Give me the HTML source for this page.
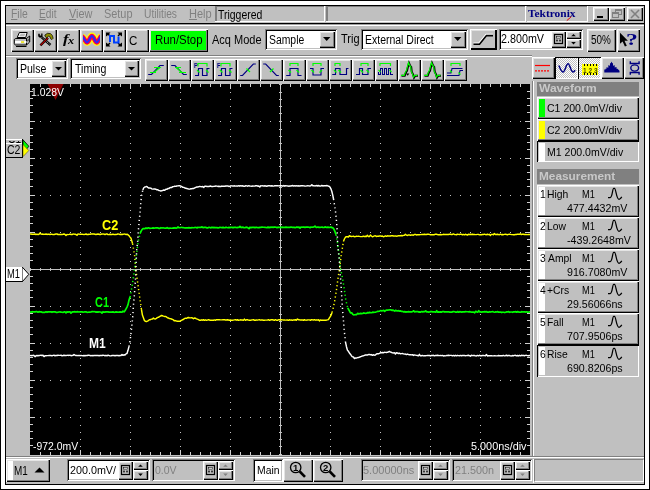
<!DOCTYPE html>
<html><head><meta charset="utf-8"><title>Tektronix</title>
<style>
html,body{margin:0;padding:0}
body{width:650px;height:490px;position:relative;overflow:hidden;background:#fff;font-family:"Liberation Sans",sans-serif;font-size:11px;color:#000}
#a{position:absolute;left:0;top:0;width:650px;height:490px;overflow:hidden;will-change:transform}
#a div,#a span,#a svg{position:absolute;box-sizing:border-box}
.t{white-space:nowrap;line-height:1;transform-origin:0 0;display:block}
.r{background:#c0c0c0;box-shadow:inset 1px 1px 0 #fff,inset -1px -1px 0 #000,inset -2px -2px 0 #808080,inset 2px 2px 0 #e4e4e4}
.r2{background:#c0c0c0;box-shadow:inset 1px 1px 0 #fff,inset -2px -2px 0 #000,inset 2px 2px 0 #dfdfdf}
.s{box-shadow:inset 1px 1px 0 #808080,inset -1px -1px 0 #fff,inset 2px 2px 0 #000,inset -2px -2px 0 #c0c0c0}
.p{background-color:#c0c0c0;box-shadow:inset 1px 1px 0 #000,inset -1px -1px 0 #fff}
.s1{box-shadow:inset -1px -1px 0 #fff,inset 1px 1px 0 #808080,inset 2px 0 0 #808080}
.ck{background-image:conic-gradient(#fff 25%,#c0c0c0 0 50%,#fff 0 75%,#c0c0c0 0);background-size:2px 2px}
</style></head>
<body><div id="a">
<div style="left:0px;top:0px;width:650px;height:490px;border:1px solid #000;background:#fff"></div>
<div style="left:5px;top:5px;width:640px;height:480px;border:1px solid #000;background:#c0c0c0"></div>
<span class="t" style="left:10.75px;top:8.00px;font-size:12px;color:#808080;transform:scaleX(0.866);"><u>F</u>ile</span>
<span class="t" style="left:39.17px;top:8.00px;font-size:12px;color:#808080;transform:scaleX(0.845);"><u>E</u>dit</span>
<span class="t" style="left:68.67px;top:8.00px;font-size:12px;color:#808080;transform:scaleX(0.910);"><u>V</u>iew</span>
<span class="t" style="left:103.92px;top:8.00px;font-size:12px;color:#808080;transform:scaleX(0.909);">Setup</span>
<span class="t" style="left:144.26px;top:8.00px;font-size:12px;color:#808080;transform:scaleX(0.853);">Utilities</span>
<span class="t" style="left:188.81px;top:8.00px;font-size:12px;color:#808080;transform:scaleX(0.919);"><u>H</u>elp</span>
<div class="s1" style="left:215px;top:6px;width:110px;height:16px;"></div>
<div class="s1" style="left:326px;top:6px;width:200px;height:16px;"></div>
<div style="left:527px;top:6px;width:61px;height:16px;box-shadow:inset -1px -1px 0 #fff,inset 0 1px 0 #808080"></div>
<span class="t" style="left:218.28px;top:9.00px;font-size:12px;color:#000;transform:scaleX(0.870);">Triggered</span>
<span class="t" style="left:528.40px;top:8.00px;font-size:11px;color:#000080;font-weight:bold;font-family:&quot;Liberation Serif&quot;,serif;transform:scaleX(1.036);">Tektronix</span>
<div class="r" style="left:593px;top:7px;width:16px;height:14px;"></div>
<div class="r" style="left:609px;top:7px;width:16px;height:14px;"></div>
<div class="r" style="left:627px;top:7px;width:16px;height:14px;"></div>
<div style="left:6px;top:23px;width:638px;height:1px;background:#000"></div>
<div style="left:6px;top:24px;width:638px;height:1px;background:#a0a0a0"></div>
<div style="left:6px;top:25px;width:638px;height:1px;background:#fff"></div>
<div class="r" style="left:11px;top:29px;width:23px;height:23px;"></div>
<div class="r" style="left:34px;top:29px;width:23px;height:23px;"></div>
<div class="r" style="left:57px;top:29px;width:23px;height:23px;"></div>
<div class="r" style="left:80px;top:29px;width:23px;height:23px;"></div>
<div class="r" style="left:103px;top:29px;width:23px;height:23px;"></div>
<div class="r" style="left:126px;top:29px;width:23px;height:23px;"></div>
<div class="r" style="left:149px;top:29px;width:59px;height:23px;"></div>
<div style="left:151px;top:31px;width:55px;height:19px;background:#00ff00"></div>
<span class="t" style="left:154.99px;top:34.00px;font-size:12px;color:#000;transform:scaleX(0.950);">Run/Stop</span>
<span class="t" style="left:212.00px;top:34.00px;font-size:12px;color:#000;transform:scaleX(0.916);">Acq Mode</span>
<div class="s" style="left:265px;top:29px;width:72px;height:21px;background:#fff"></div>
<div class="r" style="left:319px;top:31px;width:16px;height:17px;"></div>
<span class="t" style="left:269.15px;top:34.00px;font-size:12px;color:#000;transform:scaleX(0.866);">Sample</span>
<span class="t" style="left:341.47px;top:33.00px;font-size:12px;color:#000;transform:scaleX(0.914);">Trig</span>
<div class="s" style="left:361px;top:29px;width:107px;height:21px;background:#fff"></div>
<div class="r" style="left:450px;top:31px;width:16px;height:17px;"></div>
<span class="t" style="left:365.05px;top:34.00px;font-size:12px;color:#000;transform:scaleX(0.873);">External Direct</span>
<div class="r2" style="left:470px;top:29px;width:27px;height:21px;"></div>
<div class="s" style="left:499px;top:29px;width:84px;height:21px;background:#fff"></div>
<span class="t" style="left:501.25px;top:33.00px;font-size:12px;color:#000;transform:scaleX(0.895);">2.800mV</span>
<div class="r" style="left:551px;top:31px;width:15px;height:17px;"></div>
<div class="r" style="left:566px;top:31px;width:15px;height:8px;"></div>
<div class="r" style="left:566px;top:39px;width:15px;height:9px;"></div>
<div class="r" style="left:587px;top:29px;width:29px;height:23px;"></div>
<span class="t" style="left:591.19px;top:34.00px;font-size:12px;color:#000;transform:scaleX(0.826);">50%</span>
<div class="r" style="left:617px;top:29px;width:23px;height:23px;"></div>
<span class="t" style="left:625.62px;top:31.00px;font-size:17px;color:#000080;font-weight:bold;font-family:&quot;Liberation Serif&quot;,serif;transform:scaleX(1.385);">?</span>
<div style="left:6px;top:55px;width:526px;height:1px;background:#808080"></div>
<div style="left:6px;top:56px;width:526px;height:1px;background:#fff"></div>
<div class="s" style="left:16px;top:58px;width:52px;height:21px;background:#fff"></div>
<div class="r" style="left:51px;top:60px;width:15px;height:17px;"></div>
<span class="t" style="left:20.14px;top:63.00px;font-size:12px;color:#000;transform:scaleX(0.877);">Pulse</span>
<div class="s" style="left:70px;top:58px;width:71px;height:21px;background:#fff"></div>
<div class="r" style="left:124px;top:60px;width:15px;height:17px;"></div>
<span class="t" style="left:74.78px;top:63.00px;font-size:12px;color:#000;transform:scaleX(0.881);">Timing</span>
<div class="r" style="left:145px;top:59px;width:23px;height:22px;"></div>
<div class="r" style="left:168px;top:59px;width:23px;height:22px;"></div>
<div class="r" style="left:191px;top:59px;width:23px;height:22px;"></div>
<div class="r" style="left:214px;top:59px;width:23px;height:22px;"></div>
<div class="r" style="left:237px;top:59px;width:23px;height:22px;"></div>
<div class="r" style="left:260px;top:59px;width:23px;height:22px;"></div>
<div class="r" style="left:283px;top:59px;width:23px;height:22px;"></div>
<div class="r" style="left:306px;top:59px;width:23px;height:22px;"></div>
<div class="r" style="left:329px;top:59px;width:23px;height:22px;"></div>
<div class="r" style="left:352px;top:59px;width:23px;height:22px;"></div>
<div class="r" style="left:375px;top:59px;width:23px;height:22px;"></div>
<div class="r" style="left:398px;top:59px;width:23px;height:22px;"></div>
<div class="r" style="left:421px;top:59px;width:23px;height:22px;"></div>
<div class="r" style="left:444px;top:59px;width:23px;height:22px;"></div>
<div class="r" style="left:532px;top:57px;width:23px;height:22px;"></div>
<div class="p ck" style="left:555px;top:57px;width:23px;height:22px;"></div>
<div class="p ck" style="left:578px;top:57px;width:23px;height:22px;"></div>
<div class="r" style="left:601px;top:57px;width:23px;height:22px;"></div>
<div class="r" style="left:624px;top:57px;width:20px;height:22px;"></div>
<div style="left:30px;top:84px;width:500px;height:371px;background:#000"></div>
<div style="left:532px;top:81px;width:1px;height:375px;background:#808080"></div>
<div style="left:533px;top:81px;width:1px;height:375px;background:#fff"></div>
<div style="left:6px;top:456px;width:638px;height:1px;background:#808080"></div>
<div style="left:6px;top:457px;width:638px;height:1px;background:#fff"></div>
<svg style="left:0;top:0" width="650" height="490" viewBox="0 0 650 490"><clipPath id="cp"><rect x="30" y="84" width="500" height="371"/></clipPath><path d="M30 121h1M30 158h1M30 195h1M30 232h1M30 306h1M30 343h1M30 380h1M30 417h1M40 121h1M40 158h1M40 195h1M40 232h1M40 306h1M40 343h1M40 380h1M40 417h1M50 121h1M50 158h1M50 195h1M50 232h1M50 306h1M50 343h1M50 380h1M50 417h1M60 121h1M60 158h1M60 195h1M60 232h1M60 306h1M60 343h1M60 380h1M60 417h1M70 121h1M70 158h1M70 195h1M70 232h1M70 306h1M70 343h1M70 380h1M70 417h1M80 84h1M80 92h1M80 99h1M80 106h1M80 113h1M80 121h1M80 129h1M80 136h1M80 143h1M80 150h1M80 158h1M80 166h1M80 173h1M80 180h1M80 187h1M80 195h1M80 203h1M80 210h1M80 217h1M80 224h1M80 232h1M80 240h1M80 247h1M80 254h1M80 261h1M80 269h1M80 277h1M80 284h1M80 291h1M80 298h1M80 306h1M80 314h1M80 321h1M80 328h1M80 335h1M80 343h1M80 351h1M80 358h1M80 365h1M80 372h1M80 380h1M80 388h1M80 395h1M80 402h1M80 409h1M80 417h1M80 425h1M80 432h1M80 439h1M80 446h1M80 454h1M90 121h1M90 158h1M90 195h1M90 232h1M90 306h1M90 343h1M90 380h1M90 417h1M100 121h1M100 158h1M100 195h1M100 232h1M100 306h1M100 343h1M100 380h1M100 417h1M110 121h1M110 158h1M110 195h1M110 232h1M110 306h1M110 343h1M110 380h1M110 417h1M120 121h1M120 158h1M120 195h1M120 232h1M120 306h1M120 343h1M120 380h1M120 417h1M130 84h1M130 92h1M130 99h1M130 106h1M130 113h1M130 121h1M130 129h1M130 136h1M130 143h1M130 150h1M130 158h1M130 166h1M130 173h1M130 180h1M130 187h1M130 195h1M130 203h1M130 210h1M130 217h1M130 224h1M130 232h1M130 240h1M130 247h1M130 254h1M130 261h1M130 269h1M130 277h1M130 284h1M130 291h1M130 298h1M130 306h1M130 314h1M130 321h1M130 328h1M130 335h1M130 343h1M130 351h1M130 358h1M130 365h1M130 372h1M130 380h1M130 388h1M130 395h1M130 402h1M130 409h1M130 417h1M130 425h1M130 432h1M130 439h1M130 446h1M130 454h1M140 121h1M140 158h1M140 195h1M140 232h1M140 306h1M140 343h1M140 380h1M140 417h1M150 121h1M150 158h1M150 195h1M150 232h1M150 306h1M150 343h1M150 380h1M150 417h1M160 121h1M160 158h1M160 195h1M160 232h1M160 306h1M160 343h1M160 380h1M160 417h1M170 121h1M170 158h1M170 195h1M170 232h1M170 306h1M170 343h1M170 380h1M170 417h1M180 84h1M180 92h1M180 99h1M180 106h1M180 113h1M180 121h1M180 129h1M180 136h1M180 143h1M180 150h1M180 158h1M180 166h1M180 173h1M180 180h1M180 187h1M180 195h1M180 203h1M180 210h1M180 217h1M180 224h1M180 232h1M180 240h1M180 247h1M180 254h1M180 261h1M180 269h1M180 277h1M180 284h1M180 291h1M180 298h1M180 306h1M180 314h1M180 321h1M180 328h1M180 335h1M180 343h1M180 351h1M180 358h1M180 365h1M180 372h1M180 380h1M180 388h1M180 395h1M180 402h1M180 409h1M180 417h1M180 425h1M180 432h1M180 439h1M180 446h1M180 454h1M190 121h1M190 158h1M190 195h1M190 232h1M190 306h1M190 343h1M190 380h1M190 417h1M200 121h1M200 158h1M200 195h1M200 232h1M200 306h1M200 343h1M200 380h1M200 417h1M210 121h1M210 158h1M210 195h1M210 232h1M210 306h1M210 343h1M210 380h1M210 417h1M220 121h1M220 158h1M220 195h1M220 232h1M220 306h1M220 343h1M220 380h1M220 417h1M230 84h1M230 92h1M230 99h1M230 106h1M230 113h1M230 121h1M230 129h1M230 136h1M230 143h1M230 150h1M230 158h1M230 166h1M230 173h1M230 180h1M230 187h1M230 195h1M230 203h1M230 210h1M230 217h1M230 224h1M230 232h1M230 240h1M230 247h1M230 254h1M230 261h1M230 269h1M230 277h1M230 284h1M230 291h1M230 298h1M230 306h1M230 314h1M230 321h1M230 328h1M230 335h1M230 343h1M230 351h1M230 358h1M230 365h1M230 372h1M230 380h1M230 388h1M230 395h1M230 402h1M230 409h1M230 417h1M230 425h1M230 432h1M230 439h1M230 446h1M230 454h1M240 121h1M240 158h1M240 195h1M240 232h1M240 306h1M240 343h1M240 380h1M240 417h1M250 121h1M250 158h1M250 195h1M250 232h1M250 306h1M250 343h1M250 380h1M250 417h1M260 121h1M260 158h1M260 195h1M260 232h1M260 306h1M260 343h1M260 380h1M260 417h1M270 121h1M270 158h1M270 195h1M270 232h1M270 306h1M270 343h1M270 380h1M270 417h1M280 121h1M280 158h1M280 195h1M280 232h1M280 306h1M280 343h1M280 380h1M280 417h1M290 121h1M290 158h1M290 195h1M290 232h1M290 306h1M290 343h1M290 380h1M290 417h1M300 121h1M300 158h1M300 195h1M300 232h1M300 306h1M300 343h1M300 380h1M300 417h1M310 121h1M310 158h1M310 195h1M310 232h1M310 306h1M310 343h1M310 380h1M310 417h1M320 121h1M320 158h1M320 195h1M320 232h1M320 306h1M320 343h1M320 380h1M320 417h1M330 84h1M330 92h1M330 99h1M330 106h1M330 113h1M330 121h1M330 129h1M330 136h1M330 143h1M330 150h1M330 158h1M330 166h1M330 173h1M330 180h1M330 187h1M330 195h1M330 203h1M330 210h1M330 217h1M330 224h1M330 232h1M330 240h1M330 247h1M330 254h1M330 261h1M330 269h1M330 277h1M330 284h1M330 291h1M330 298h1M330 306h1M330 314h1M330 321h1M330 328h1M330 335h1M330 343h1M330 351h1M330 358h1M330 365h1M330 372h1M330 380h1M330 388h1M330 395h1M330 402h1M330 409h1M330 417h1M330 425h1M330 432h1M330 439h1M330 446h1M330 454h1M340 121h1M340 158h1M340 195h1M340 232h1M340 306h1M340 343h1M340 380h1M340 417h1M350 121h1M350 158h1M350 195h1M350 232h1M350 306h1M350 343h1M350 380h1M350 417h1M360 121h1M360 158h1M360 195h1M360 232h1M360 306h1M360 343h1M360 380h1M360 417h1M370 121h1M370 158h1M370 195h1M370 232h1M370 306h1M370 343h1M370 380h1M370 417h1M380 84h1M380 92h1M380 99h1M380 106h1M380 113h1M380 121h1M380 129h1M380 136h1M380 143h1M380 150h1M380 158h1M380 166h1M380 173h1M380 180h1M380 187h1M380 195h1M380 203h1M380 210h1M380 217h1M380 224h1M380 232h1M380 240h1M380 247h1M380 254h1M380 261h1M380 269h1M380 277h1M380 284h1M380 291h1M380 298h1M380 306h1M380 314h1M380 321h1M380 328h1M380 335h1M380 343h1M380 351h1M380 358h1M380 365h1M380 372h1M380 380h1M380 388h1M380 395h1M380 402h1M380 409h1M380 417h1M380 425h1M380 432h1M380 439h1M380 446h1M380 454h1M390 121h1M390 158h1M390 195h1M390 232h1M390 306h1M390 343h1M390 380h1M390 417h1M400 121h1M400 158h1M400 195h1M400 232h1M400 306h1M400 343h1M400 380h1M400 417h1M410 121h1M410 158h1M410 195h1M410 232h1M410 306h1M410 343h1M410 380h1M410 417h1M420 121h1M420 158h1M420 195h1M420 232h1M420 306h1M420 343h1M420 380h1M420 417h1M430 84h1M430 92h1M430 99h1M430 106h1M430 113h1M430 121h1M430 129h1M430 136h1M430 143h1M430 150h1M430 158h1M430 166h1M430 173h1M430 180h1M430 187h1M430 195h1M430 203h1M430 210h1M430 217h1M430 224h1M430 232h1M430 240h1M430 247h1M430 254h1M430 261h1M430 269h1M430 277h1M430 284h1M430 291h1M430 298h1M430 306h1M430 314h1M430 321h1M430 328h1M430 335h1M430 343h1M430 351h1M430 358h1M430 365h1M430 372h1M430 380h1M430 388h1M430 395h1M430 402h1M430 409h1M430 417h1M430 425h1M430 432h1M430 439h1M430 446h1M430 454h1M440 121h1M440 158h1M440 195h1M440 232h1M440 306h1M440 343h1M440 380h1M440 417h1M450 121h1M450 158h1M450 195h1M450 232h1M450 306h1M450 343h1M450 380h1M450 417h1M460 121h1M460 158h1M460 195h1M460 232h1M460 306h1M460 343h1M460 380h1M460 417h1M470 121h1M470 158h1M470 195h1M470 232h1M470 306h1M470 343h1M470 380h1M470 417h1M480 84h1M480 92h1M480 99h1M480 106h1M480 113h1M480 121h1M480 129h1M480 136h1M480 143h1M480 150h1M480 158h1M480 166h1M480 173h1M480 180h1M480 187h1M480 195h1M480 203h1M480 210h1M480 217h1M480 224h1M480 232h1M480 240h1M480 247h1M480 254h1M480 261h1M480 269h1M480 277h1M480 284h1M480 291h1M480 298h1M480 306h1M480 314h1M480 321h1M480 328h1M480 335h1M480 343h1M480 351h1M480 358h1M480 365h1M480 372h1M480 380h1M480 388h1M480 395h1M480 402h1M480 409h1M480 417h1M480 425h1M480 432h1M480 439h1M480 446h1M480 454h1M490 121h1M490 158h1M490 195h1M490 232h1M490 306h1M490 343h1M490 380h1M490 417h1M500 121h1M500 158h1M500 195h1M500 232h1M500 306h1M500 343h1M500 380h1M500 417h1M510 121h1M510 158h1M510 195h1M510 232h1M510 306h1M510 343h1M510 380h1M510 417h1M520 121h1M520 158h1M520 195h1M520 232h1M520 306h1M520 343h1M520 380h1M520 417h1M530 121h1M530 158h1M530 195h1M530 232h1M530 306h1M530 343h1M530 380h1M530 417h1" stroke="#c4c4c4" stroke-width="1" transform="translate(0,0.5)" shape-rendering="crispEdges"/><path d="M30 269.5H530M280.5 84V455M30.5 268v3M279 84.5h3M40.5 268v3M279 92.5h3M50.5 268v3M279 99.5h3M60.5 268v3M279 106.5h3M70.5 268v3M279 113.5h3M80.5 268v3M279 121.5h3M90.5 268v3M279 129.5h3M100.5 268v3M279 136.5h3M110.5 268v3M279 143.5h3M120.5 268v3M279 150.5h3M130.5 268v3M279 158.5h3M140.5 268v3M279 166.5h3M150.5 268v3M279 173.5h3M160.5 268v3M279 180.5h3M170.5 268v3M279 187.5h3M180.5 268v3M279 195.5h3M190.5 268v3M279 203.5h3M200.5 268v3M279 210.5h3M210.5 268v3M279 217.5h3M220.5 268v3M279 224.5h3M230.5 268v3M279 232.5h3M240.5 268v3M279 240.5h3M250.5 268v3M279 247.5h3M260.5 268v3M279 254.5h3M270.5 268v3M279 261.5h3M280.5 268v3M279 269.5h3M290.5 268v3M279 277.5h3M300.5 268v3M279 284.5h3M310.5 268v3M279 291.5h3M320.5 268v3M279 298.5h3M330.5 268v3M279 306.5h3M340.5 268v3M279 314.5h3M350.5 268v3M279 321.5h3M360.5 268v3M279 328.5h3M370.5 268v3M279 335.5h3M380.5 268v3M279 343.5h3M390.5 268v3M279 351.5h3M400.5 268v3M279 358.5h3M410.5 268v3M279 365.5h3M420.5 268v3M279 372.5h3M430.5 268v3M279 380.5h3M440.5 268v3M279 388.5h3M450.5 268v3M279 395.5h3M460.5 268v3M279 402.5h3M470.5 268v3M279 409.5h3M480.5 268v3M279 417.5h3M490.5 268v3M279 425.5h3M500.5 268v3M279 432.5h3M510.5 268v3M279 439.5h3M520.5 268v3M279 446.5h3M530.5 268v3M279 454.5h3" stroke="#c0c0c0" stroke-width="1" fill="none" shape-rendering="crispEdges"/><path d="M40.5 84v3M40.5 455v-3M30 91.5h3M530 91.5h-3M50.5 84v3M50.5 455v-3M30 98.5h3M530 98.5h-3M60.5 84v3M60.5 455v-3M30 105.5h3M530 105.5h-3M70.5 84v3M70.5 455v-3M30 112.5h3M530 112.5h-3M80.5 84v5M80.5 455v-5M30 121.5h5M530 121.5h-5M90.5 84v3M90.5 455v-3M30 128.5h3M530 128.5h-3M100.5 84v3M100.5 455v-3M30 135.5h3M530 135.5h-3M110.5 84v3M110.5 455v-3M30 142.5h3M530 142.5h-3M120.5 84v3M120.5 455v-3M30 149.5h3M530 149.5h-3M130.5 84v5M130.5 455v-5M30 158.5h5M530 158.5h-5M140.5 84v3M140.5 455v-3M30 165.5h3M530 165.5h-3M150.5 84v3M150.5 455v-3M30 172.5h3M530 172.5h-3M160.5 84v3M160.5 455v-3M30 179.5h3M530 179.5h-3M170.5 84v3M170.5 455v-3M30 186.5h3M530 186.5h-3M180.5 84v5M180.5 455v-5M30 195.5h5M530 195.5h-5M190.5 84v3M190.5 455v-3M30 202.5h3M530 202.5h-3M200.5 84v3M200.5 455v-3M30 209.5h3M530 209.5h-3M210.5 84v3M210.5 455v-3M30 216.5h3M530 216.5h-3M220.5 84v3M220.5 455v-3M30 223.5h3M530 223.5h-3M230.5 84v5M230.5 455v-5M30 232.5h5M530 232.5h-5M240.5 84v3M240.5 455v-3M30 239.5h3M530 239.5h-3M250.5 84v3M250.5 455v-3M30 246.5h3M530 246.5h-3M260.5 84v3M260.5 455v-3M30 253.5h3M530 253.5h-3M270.5 84v3M270.5 455v-3M30 260.5h3M530 260.5h-3M280.5 84v5M280.5 455v-5M30 269.5h5M530 269.5h-5M290.5 84v3M290.5 455v-3M30 276.5h3M530 276.5h-3M300.5 84v3M300.5 455v-3M30 283.5h3M530 283.5h-3M310.5 84v3M310.5 455v-3M30 290.5h3M530 290.5h-3M320.5 84v3M320.5 455v-3M30 297.5h3M530 297.5h-3M330.5 84v5M330.5 455v-5M30 306.5h5M530 306.5h-5M340.5 84v3M340.5 455v-3M30 313.5h3M530 313.5h-3M350.5 84v3M350.5 455v-3M30 320.5h3M530 320.5h-3M360.5 84v3M360.5 455v-3M30 327.5h3M530 327.5h-3M370.5 84v3M370.5 455v-3M30 334.5h3M530 334.5h-3M380.5 84v5M380.5 455v-5M30 343.5h5M530 343.5h-5M390.5 84v3M390.5 455v-3M30 350.5h3M530 350.5h-3M400.5 84v3M400.5 455v-3M30 357.5h3M530 357.5h-3M410.5 84v3M410.5 455v-3M30 364.5h3M530 364.5h-3M420.5 84v3M420.5 455v-3M30 371.5h3M530 371.5h-3M430.5 84v5M430.5 455v-5M30 380.5h5M530 380.5h-5M440.5 84v3M440.5 455v-3M30 387.5h3M530 387.5h-3M450.5 84v3M450.5 455v-3M30 394.5h3M530 394.5h-3M460.5 84v3M460.5 455v-3M30 401.5h3M530 401.5h-3M470.5 84v3M470.5 455v-3M30 408.5h3M530 408.5h-3M480.5 84v5M480.5 455v-5M30 417.5h5M530 417.5h-5M490.5 84v3M490.5 455v-3M30 424.5h3M530 424.5h-3M500.5 84v3M500.5 455v-3M30 431.5h3M530 431.5h-3M510.5 84v3M510.5 455v-3M30 438.5h3M530 438.5h-3M520.5 84v3M520.5 455v-3M30 445.5h3M530 445.5h-3" stroke="#d0d0d0" stroke-width="1" fill="none" shape-rendering="crispEdges"/><path d="M47.5 84h16l-8 16z" fill="#8c0000"/><polyline clip-path="url(#cp)" points="30,234.06 31,234.0 32,234.21 33,234.31 34,234.25 35,234.01 36,234.53 37,234.11 38,234.61 39,234.23 40,233.08 41,234.05 42,234.17 43,234.08 44,234.4 45,234.33 46,233.99 47,234.43 48,234.17 49,234.27 50,234.51 51,234.12 52,234.32 53,234.46 54,234.64 55,234.24 56,234.06 57,233.98 58,234.49 59,234.56 60,234.44 61,234.36 62,234.54 63,234.28 64,233.99 65,234.4 66,235.43 67,234.57 68,234.61 69,234.38 70,234.1 71,234.47 72,234.59 73,234.07 74,234.14 75,234.25 76,234.44 77,235.33 78,234.06 79,234.11 80,234.29 81,234.13 82,234.24 83,234.35 84,234.43 85,234.38 86,233.99 87,234.5 88,234.51 89,234.23 90,234.39 91,234.0 92,234.06 93,233.99 94,234.06 95,234.2 96,234.56 97,234.05 98,234.19 99,234.04 100,234.65 101,234.29 102,234.02 103,234.14 104,234.06 105,234.62 106,234.05 107,233.97 108,234.63 109,234.44 110,234.21 111,234.49 112,234.5 113,234.11 114,234.64 115,234.51 116,234.47 117,234.31 118,233.97 119,234.15 120,234.43 121,234.26 122,234.64 123,234.21 124,234.11 125,234.09 126,234.58 127,234.29 128,234.72 129,235.67 130,237.11 131,238.33 132,241.65 132.6,243.8" fill="none" stroke="#ffff00" stroke-width="1.45" stroke-linejoin="round"/><polyline clip-path="url(#cp)" points="141.4,309.21 142.4,315.08 143.4,317.77 144.4,320.54 145.4,321.27 146.4,321.61 147.4,321.1 148.4,320.53 149.4,319.69 150.4,319.71 151.4,319.13 152.4,319.07 153.4,318.11 154.4,318.86 155.4,318.98 156.4,318.39 157.4,317.45 158.4,317.38 159.4,316.7 160.4,316.21 161.4,315.45 162.4,315.72 163.4,316.09 164.4,316.43 165.4,316.41 166.4,316.85 167.4,317.7 168.4,317.94 169.4,318.64 170.4,318.61 171.4,319.02 172.4,319.44 173.4,319.88 174.4,320.87 175.4,320.59 176.4,321.06 177.4,321.16 178.4,321.13 179.4,321.25 180.4,320.97 181.4,320.29 182.4,319.77 183.4,319.44 184.4,318.61 185.4,318.12 186.4,318.41 187.4,317.8 188.4,317.48 189.4,317.8 190.4,317.85 191.4,317.72 192.4,317.86 193.4,318.73 194.4,318.06 195.4,318.2 196.4,318.87 197.4,319.17 198.4,319.63 199.4,320.23 200.4,320.33 201.4,319.84 202.4,320.2 203.4,319.74 204.4,320.29 205.4,319.83 206.4,320.29 207.4,320.14 208.4,319.69 209.4,319.95 210.4,320.31 211.4,320.21 212.4,320.25 213.4,320.25 214.4,319.89 215.4,320.3 216.4,319.74 217.4,319.82 218.4,319.76 219.4,319.79 220.4,319.86 221.4,319.85 222.4,319.77 223.4,319.66 224.4,319.66 225.4,320.04 226.4,319.98 227.4,319.72 228.4,319.95 229.4,320.23 230.4,320.0 231.4,320.34 232.4,320.23 233.4,320.1 234.4,319.89 235.4,319.74 236.4,320.17 237.4,319.76 238.4,320.24 239.4,320.12 240.4,319.82 241.4,319.97 242.4,319.96 243.4,320.32 244.4,319.13 245.4,320.27 246.4,319.78 247.4,319.71 248.4,320.11 249.4,320.19 250.4,320.22 251.4,320.06 252.4,319.86 253.4,319.71 254.4,320.25 255.4,320.27 256.4,320.07 257.4,320.15 258.4,319.85 259.4,319.75 260.4,320.15 261.4,319.95 262.4,320.0 263.4,320.18 264.4,320.22 265.4,320.13 266.4,320.15 267.4,320.1 268.4,319.68 269.4,320.32 270.4,319.97 271.4,319.66 272.4,319.82 273.4,319.97 274.4,320.3 275.4,319.71 276.4,320.17 277.4,320.22 278.4,319.81 279.4,319.81 280.4,319.97 281.4,319.7 282.4,319.85 283.4,320.09 284.4,320.07 285.4,320.11 286.4,320.08 287.4,319.99 288.4,320.33 289.4,319.8 290.4,320.15 291.4,319.98 292.4,320.35 293.4,319.87 294.4,319.98 295.4,319.7 296.4,320.35 297.4,319.02 298.4,319.71 299.4,319.83 300.4,320.07 301.4,319.85 302.4,319.91 303.4,320.26 304.4,319.76 305.4,320.13 306.4,320.16 307.4,319.91 308.4,319.88 309.4,319.89 310.4,320.31 311.4,319.66 312.4,319.83 313.4,319.92 314.4,319.7 315.4,320.18 316.4,319.85 317.4,320.11 318.4,319.75 319.4,320.86 320.4,319.91 321.4,320.27 322.4,320.09 323.4,320.31 324.4,320.15 325.4,320.16 326.4,320.18 327.4,319.85 328.4,319.66 329.4,317.98 330.4,316.38 331.4,314.33 332,312.5" fill="none" stroke="#ffff00" stroke-width="1.45" stroke-linejoin="round"/><polyline clip-path="url(#cp)" points="343.4,241.61 344.4,238.99 345.4,237.26 346.4,236.71 347.4,236.76 348.4,236.95 349.4,235.64 350.4,236.32 351.4,236.52 352.4,236.37 353.4,236.24 354.4,236.7 355.4,236.6 356.4,236.25 357.4,236.4 358.4,236.28 359.4,236.39 360.4,236.6 361.4,236.62 362.4,236.43 363.4,236.18 364.4,236.63 365.4,236.23 366.4,236.48 367.4,235.35 368.4,236.54 369.4,236.48 370.4,235.14 371.4,235.96 372.4,236.81 373.4,236.37 374.4,235.9 375.4,235.82 376.4,236.45 377.4,236.14 378.4,236.29 379.4,235.95 380.4,235.86 381.4,236.26 382.4,236.07 383.4,236.78 384.4,236.29 385.4,235.82 386.4,236.31 387.4,235.84 388.4,235.96 389.4,235.89 390.4,236.05 391.4,235.73 392.4,235.79 393.4,236.02 394.4,236.09 395.4,235.87 396.4,236.18 397.4,236.06 398.4,235.63 399.4,235.66 400.4,235.78 401.4,235.53 402.4,235.78 403.4,235.35 404.4,235.33 405.4,234.31 406.4,235.16 407.4,235.46 408.4,234.96 409.4,234.92 410.4,235.18 411.4,234.98 412.4,235.08 413.4,235.19 414.4,234.51 415.4,234.43 416.4,234.93 417.4,234.79 418.4,234.75 419.4,234.73 420.4,234.64 421.4,234.53 422.4,234.38 423.4,234.48 424.4,234.32 425.4,234.43 426.4,234.47 427.4,234.19 428.4,234.19 429.4,234.4 430.4,234.82 431.4,234.67 432.4,234.8 433.4,234.66 434.4,234.71 435.4,234.2 436.4,234.23 437.4,234.48 438.4,234.7 439.4,234.72 440.4,234.5 441.4,234.8 442.4,234.63 443.4,234.32 444.4,234.47 445.4,234.57 446.4,234.42 447.4,234.44 448.4,234.49 449.4,234.26 450.4,234.22 451.4,234.59 452.4,234.44 453.4,233.93 454.4,234.44 455.4,234.62 456.4,234.74 457.4,234.23 458.4,234.36 459.4,234.41 460.4,234.29 461.4,234.32 462.4,234.77 463.4,234.38 464.4,234.84 465.4,234.31 466.4,234.61 467.4,235.12 468.4,234.31 469.4,234.41 470.4,234.31 471.4,234.57 472.4,234.29 473.4,234.51 474.4,234.57 475.4,234.62 476.4,234.6 477.4,234.39 478.4,234.39 479.4,234.85 480.4,234.66 481.4,234.72 482.4,234.44 483.4,234.58 484.4,234.17 485.4,234.49 486.4,234.71 487.4,234.26 488.4,234.61 489.4,234.34 490.4,235.52 491.4,234.37 492.4,234.4 493.4,234.75 494.4,233.5 495.4,234.43 496.4,234.45 497.4,234.23 498.4,234.55 499.4,234.69 500.4,234.19 501.4,234.71 502.4,234.55 503.4,234.67 504.4,234.39 505.4,234.27 506.4,234.42 507.4,234.7 508.4,234.36 509.4,234.18 510.4,234.37 511.4,234.6 512.4,234.65 513.4,234.77 514.4,234.75 515.4,234.58 516.4,234.48 517.4,234.18 518.4,234.26 519.4,234.25 520.4,233.82 521.4,234.54 522.4,234.18 523.4,234.23 524.4,234.54 525.4,234.36 526.4,234.56 527.4,234.61 528.4,234.46 529.4,234.58 530,234.5" fill="none" stroke="#ffff00" stroke-width="1.45" stroke-linejoin="round"/><polyline clip-path="url(#cp)" points="132.6,243.8 134.6,255.4 135.7,269 137.7,283 139.7,297 141.4,309" fill="none" stroke="#ffff00" stroke-width="1.5" stroke-dasharray="1.2 2.6" stroke-linejoin="round"/><polyline clip-path="url(#cp)" points="332,312.5 333,309 334.6,301.5 336.6,289 338.2,277 339.7,267.7 341.2,255.4 343.4,241.5" fill="none" stroke="#ffff00" stroke-width="1.5" stroke-dasharray="1.2 2.6" stroke-linejoin="round"/><polyline clip-path="url(#cp)" points="30,311.81 31,312.2 32,311.78 33,311.72 34,311.95 35,311.96 36,311.68 37,311.71 38,312.19 39,311.69 40,311.91 41,311.75 42,312.35 43,312.22 44,312.34 45,312.32 46,311.77 47,312.3 48,311.9 49,311.76 50,311.84 51,311.75 52,312.29 53,311.83 54,311.87 55,311.78 56,312.31 57,312.28 58,312.2 59,312.02 60,311.9 61,312.04 62,312.27 63,312.35 64,311.93 65,311.84 66,312.95 67,311.71 68,312.08 69,311.86 70,311.87 71,313.16 72,312.17 73,311.85 74,311.94 75,311.68 76,312.08 77,311.69 78,311.86 79,312.02 80,311.86 81,311.91 82,311.76 83,312.21 84,311.97 85,311.75 86,311.84 87,312.33 88,312.22 89,312.07 90,312.07 91,311.99 92,311.65 93,311.67 94,311.76 95,311.72 96,312.11 97,311.94 98,312.1 99,311.94 100,312.01 101,312.09 102,313.06 103,311.65 104,312.17 105,312.17 106,311.81 107,311.81 108,311.88 109,312.14 110,312.15 111,312.04 112,312.2 113,311.84 114,312.33 115,312.27 116,311.83 117,312.17 118,312.17 119,312.27 120,311.82 121,312.09 122,312.12 123,311.08 124,311.79 125,310.74 126,308.94 127,307.04 128,304.66 129,300.17 130,296.89" fill="none" stroke="#00ff00" stroke-width="1.7" stroke-linejoin="round"/><polyline clip-path="url(#cp)" points="140,233.67 141,231.39 142,229.57 143,228.7 144,228.62 145,228.67 146,227.9 147,228.48 148,227.9 149,227.9 150,228.4 151,228.24 152,228.23 153,227.84 154,228.29 155,227.97 156,227.75 157,227.93 158,227.97 159,228.38 160,228.29 161,227.71 162,227.98 163,227.9 164,228.03 165,228.24 166,228.2 167,227.62 168,228.14 169,228.5 170,228.07 171,228.25 172,228.23 173,227.95 174,228.11 175,227.69 176,228.17 177,227.85 178,226.99 179,227.73 180,227.75 181,227.52 182,227.47 183,227.62 184,227.78 185,228.04 186,227.73 187,227.92 188,227.84 189,227.6 190,227.95 191,227.87 192,227.65 193,227.73 194,227.64 195,227.47 196,227.51 197,227.87 198,227.38 199,227.49 200,227.36 201,227.38 202,226.85 203,227.7 204,227.34 205,227.45 206,227.42 207,227.87 208,227.85 209,227.23 210,227.53 211,227.9 212,227.23 213,227.73 214,227.38 215,227.7 216,227.65 217,227.67 218,227.81 219,227.6 220,227.32 221,227.49 222,227.67 223,227.35 224,227.68 225,227.77 226,227.18 227,227.53 228,227.78 229,227.39 230,227.74 231,227.23 232,227.31 233,227.82 234,227.39 235,227.46 236,227.47 237,227.69 238,227.37 239,227.45 240,226.36 241,227.56 242,227.3 243,227.16 244,227.76 245,227.59 246,227.19 247,227.39 248,227.78 249,228.67 250,227.19 251,227.66 252,227.42 253,227.25 254,227.33 255,227.66 256,227.41 257,227.46 258,227.66 259,227.67 260,227.33 261,227.36 262,227.06 263,227.26 264,227.27 265,227.35 266,227.51 267,227.7 268,227.08 269,227.67 270,227.14 271,227.48 272,227.04 273,227.49 274,227.1 275,227.19 276,227.26 277,227.65 278,227.13 279,227.44 280,227.47 281,227.56 282,227.14 283,227.37 284,227.3 285,227.38 286,227.15 287,227.33 288,227.31 289,227.32 290,227.35 291,226.98 292,227.3 293,227.43 294,227.23 295,227.63 296,227.4 297,226.97 298,227.43 299,227.18 300,228.2 301,227.04 302,227.23 303,227.0 304,227.17 305,227.32 306,227.13 307,227.1 308,227.12 309,227.26 310,227.6 311,227.15 312,227.25 313,227.04 314,226.99 315,226.06 316,227.29 317,227.3 318,226.97 319,227.46 320,227.42 321,227.23 322,227.14 323,227.35 324,227.49 325,226.9 326,227.3 327,227.33 328,227.16 329,227.51 330,227.46 331,227.07 332,227.7 333,227.91 334,229.34 335,231.61 336,234.62" fill="none" stroke="#00ff00" stroke-width="1.7" stroke-linejoin="round"/><polyline clip-path="url(#cp)" points="347.7,307.89 348.7,309.62 349.7,311.46 350.7,312.92 351.7,312.83 352.7,314.22 353.7,314.87 354.7,314.76 355.7,314.64 356.7,314.55 357.7,313.36 358.7,313.89 359.7,313.71 360.7,313.37 361.7,313.57 362.7,313.52 363.7,312.89 364.7,313.23 365.7,313.31 366.7,313.25 367.7,312.5 368.7,312.86 369.7,312.38 370.7,312.75 371.7,312.76 372.7,312.1 373.7,312.36 374.7,312.22 375.7,312.06 376.7,311.69 377.7,311.26 378.7,311.28 379.7,311.06 380.7,310.56 381.7,310.91 382.7,310.68 383.7,310.41 384.7,311.36 385.7,310.46 386.7,309.98 387.7,310.2 388.7,309.96 389.7,309.89 390.7,309.82 391.7,310.31 392.7,310.06 393.7,310.59 394.7,311.08 395.7,310.25 396.7,310.87 397.7,310.95 398.7,310.69 399.7,311.1 400.7,310.92 401.7,311.49 402.7,311.46 403.7,311.85 404.7,311.58 405.7,312.08 406.7,311.82 407.7,311.87 408.7,311.59 409.7,311.95 410.7,311.85 411.7,311.82 412.7,311.49 413.7,310.83 414.7,311.79 415.7,311.69 416.7,311.67 417.7,311.54 418.7,312.08 419.7,311.88 420.7,312.12 421.7,311.54 422.7,311.89 423.7,311.57 424.7,311.72 425.7,310.85 426.7,311.87 427.7,311.81 428.7,312.12 429.7,311.91 430.7,311.58 431.7,311.67 432.7,311.94 433.7,311.96 434.7,311.81 435.7,312.18 436.7,310.76 437.7,312.16 438.7,311.89 439.7,312.15 440.7,311.87 441.7,312.04 442.7,311.58 443.7,311.52 444.7,312.04 445.7,311.82 446.7,311.85 447.7,311.79 448.7,311.79 449.7,312.09 450.7,312.15 451.7,312.16 452.7,311.64 453.7,311.58 454.7,311.79 455.7,312.08 456.7,312.18 457.7,311.55 458.7,312.22 459.7,311.7 460.7,311.8 461.7,312.06 462.7,311.86 463.7,311.85 464.7,311.84 465.7,311.56 466.7,311.76 467.7,311.73 468.7,311.87 469.7,311.66 470.7,312.0 471.7,312.2 472.7,312.14 473.7,312.09 474.7,312.76 475.7,311.31 476.7,311.86 477.7,312.15 478.7,310.77 479.7,311.92 480.7,311.88 481.7,312.23 482.7,311.83 483.7,311.86 484.7,311.7 485.7,311.94 486.7,311.7 487.7,312.16 488.7,312.1 489.7,311.71 490.7,312.06 491.7,311.72 492.7,311.6 493.7,311.96 494.7,312.23 495.7,311.84 496.7,312.04 497.7,311.66 498.7,312.13 499.7,312.07 500.7,312.0 501.7,312.53 502.7,312.21 503.7,312.26 504.7,312.56 505.7,312.18 506.7,311.84 507.7,311.88 508.7,311.66 509.7,312.29 510.7,311.98 511.7,312.0 512.7,312.3 513.7,311.75 514.7,311.8 515.7,311.65 516.7,312.12 517.7,311.64 518.7,312.04 519.7,312.13 520.7,312.24 521.7,311.67 522.7,311.98 523.7,311.84 524.7,311.93 525.7,312.06 526.7,311.75 527.7,312.17 528.7,312.23 529.7,311.92 530,312" fill="none" stroke="#00ff00" stroke-width="1.7" stroke-linejoin="round"/><polyline clip-path="url(#cp)" points="130,297 131.2,291 132.3,284.6 134.6,269 136.6,253.8 138.2,241.5 140,234" fill="none" stroke="#00ff00" stroke-width="1.5" stroke-dasharray="1.2 2.6" stroke-linejoin="round"/><polyline clip-path="url(#cp)" points="336,234.6 337.2,240.8 339.2,255.4 340.3,267.7 342.3,277 344.3,289 345.8,300 347.7,307.7" fill="none" stroke="#00ff00" stroke-width="1.5" stroke-dasharray="1.2 2.6" stroke-linejoin="round"/><polyline clip-path="url(#cp)" points="30,355.74 31,355.43 32,355.69 33,355.32 34,355.45 35,356.61 36,355.74 37,355.51 38,355.8 39,355.45 40,355.41 41,355.2 42,355.5 43,355.25 44,356.59 45,355.72 46,355.77 47,355.6 48,355.62 49,355.53 50,355.58 51,355.51 52,355.82 53,355.36 54,355.23 55,355.82 56,355.34 57,355.52 58,355.24 59,355.36 60,355.35 61,355.21 62,355.74 63,355.55 64,355.29 65,355.47 66,355.58 67,355.37 68,355.31 69,355.42 70,355.16 71,355.75 72,355.54 73,355.35 74,354.46 75,355.2 76,355.46 77,355.42 78,355.66 79,355.31 80,355.67 81,355.39 82,355.62 83,355.74 84,355.51 85,355.67 86,355.48 87,355.65 88,355.24 89,355.15 90,355.56 91,355.82 92,355.44 93,355.76 94,355.42 95,355.47 96,355.36 97,355.54 98,355.38 99,355.74 100,355.46 101,355.36 102,355.55 103,355.21 104,355.38 105,355.74 106,355.29 107,355.79 108,355.18 109,355.5 110,355.69 111,355.85 112,355.51 113,355.42 114,355.57 115,355.81 116,355.52 117,355.41 118,355.54 119,355.77 120,355.49 121,355.59 122,354.49 123,355.37 124,354.83 125,355.01 126,353.86 127,353.55 128,350.33 129,346.3" fill="none" stroke="#ffffff" stroke-width="1.45" stroke-linejoin="round"/><polyline clip-path="url(#cp)" points="142.8,189.94 143.8,187.75 144.8,187.01 145.8,186.75 146.8,186.43 147.8,187.36 148.8,188.05 149.8,187.95 150.8,188.16 151.8,188.88 152.8,189.12 153.8,189.05 154.8,189.04 155.8,189.24 156.8,189.81 157.8,189.84 158.8,190.45 159.8,190.65 160.8,190.93 161.8,190.83 162.8,190.42 163.8,190.01 164.8,190.25 165.8,189.31 166.8,189.29 167.8,188.59 168.8,188.59 169.8,187.75 170.8,187.53 171.8,187.42 172.8,186.65 173.8,186.6 174.8,186.14 175.8,186.39 176.8,186.0 177.8,185.86 178.8,185.79 179.8,185.74 180.8,186.1 181.8,186.67 182.8,187.39 183.8,187.35 184.8,188.01 185.8,188.22 186.8,188.44 187.8,188.86 188.8,189.05 189.8,189.15 190.8,188.81 191.8,188.74 192.8,188.38 193.8,188.42 194.8,187.83 195.8,187.37 196.8,187.05 197.8,187.07 198.8,186.6 199.8,186.33 200.8,186.61 201.8,186.83 202.8,186.42 203.8,187.38 204.8,186.24 205.8,186.16 206.8,186.44 207.8,186.59 208.8,186.5 209.8,186.25 210.8,186.08 211.8,186.6 212.8,186.45 213.8,186.37 214.8,186.32 215.8,186.0 216.8,186.1 217.8,186.43 218.8,186.2 219.8,186.44 220.8,186.49 221.8,186.07 222.8,186.34 223.8,186.1 224.8,186.3 225.8,186.0 226.8,186.06 227.8,185.93 228.8,186.43 229.8,186.28 230.8,185.79 231.8,185.89 232.8,186.01 233.8,185.95 234.8,185.84 235.8,186.1 236.8,185.87 237.8,186.16 238.8,185.67 239.8,186.2 240.8,185.68 241.8,186.07 242.8,185.81 243.8,186.2 244.8,186.28 245.8,185.7 246.8,185.91 247.8,186.21 248.8,185.69 249.8,185.92 250.8,186.11 251.8,186.2 252.8,185.94 253.8,186.11 254.8,185.97 255.8,185.7 256.8,185.64 257.8,186.17 258.8,185.99 259.8,186.95 260.8,185.64 261.8,185.89 262.8,185.82 263.8,186.09 264.8,185.76 265.8,185.95 266.8,186.24 267.8,185.8 268.8,185.68 269.8,185.82 270.8,185.96 271.8,185.7 272.8,185.99 273.8,186.11 274.8,185.65 275.8,185.82 276.8,185.61 277.8,185.7 278.8,185.88 279.8,185.79 280.8,185.81 281.8,185.61 282.8,186.25 283.8,185.61 284.8,186.23 285.8,185.62 286.8,185.85 287.8,185.92 288.8,186.18 289.8,185.98 290.8,185.99 291.8,185.71 292.8,185.55 293.8,186.12 294.8,185.66 295.8,186.12 296.8,185.64 297.8,186.1 298.8,185.75 299.8,186.09 300.8,185.77 301.8,185.77 302.8,185.68 303.8,185.9 304.8,186.08 305.8,186.13 306.8,185.85 307.8,185.61 308.8,185.9 309.8,185.97 310.8,185.8 311.8,184.65 312.8,185.82 313.8,185.74 314.8,185.91 315.8,185.84 316.8,185.53 317.8,185.97 318.8,185.52 319.8,186.14 320.8,185.97 321.8,185.47 322.8,185.94 323.8,185.79 324.8,185.82 325.8,185.83 326.8,185.56 327.8,185.88 328.8,186.21 329.8,186.93 330.8,188.55 331.8,191.23 332.8,195.44 333.5,199" fill="none" stroke="#ffffff" stroke-width="1.45" stroke-linejoin="round"/><polyline clip-path="url(#cp)" points="345.4,341.52 346.4,346.44 347.4,350.14 348.4,351.32 349.4,352.98 350.4,354.21 351.4,355.67 352.4,356.87 353.4,356.9 354.4,358.49 355.4,357.98 356.4,358.13 357.4,357.64 358.4,357.42 359.4,357.18 360.4,356.77 361.4,356.43 362.4,355.93 363.4,355.85 364.4,355.4 365.4,355.04 366.4,354.93 367.4,354.96 368.4,354.55 369.4,354.55 370.4,354.7 371.4,354.6 372.4,355.35 373.4,354.77 374.4,355.18 375.4,354.96 376.4,353.99 377.4,353.77 378.4,353.72 379.4,353.32 380.4,352.76 381.4,352.78 382.4,352.52 383.4,352.72 384.4,352.3 385.4,352.4 386.4,352.58 387.4,352.19 388.4,351.99 389.4,351.43 390.4,352.14 391.4,352.28 392.4,352.88 393.4,352.96 394.4,352.67 395.4,354.05 396.4,352.75 397.4,352.97 398.4,353.59 399.4,353.11 400.4,353.77 401.4,353.6 402.4,353.56 403.4,353.84 404.4,354.12 405.4,354.05 406.4,354.57 407.4,354.09 408.4,354.43 409.4,354.69 410.4,354.64 411.4,354.9 412.4,354.62 413.4,355.4 414.4,354.92 415.4,355.1 416.4,355.35 417.4,355.49 418.4,355.83 419.4,354.34 420.4,355.79 421.4,355.69 422.4,355.45 423.4,355.86 424.4,355.73 425.4,355.78 426.4,355.61 427.4,355.5 428.4,355.53 429.4,355.49 430.4,355.94 431.4,355.51 432.4,355.41 433.4,355.34 434.4,355.86 435.4,355.56 436.4,355.46 437.4,355.3 438.4,355.47 439.4,355.64 440.4,355.49 441.4,355.66 442.4,355.38 443.4,355.94 444.4,355.79 445.4,355.86 446.4,355.59 447.4,355.44 448.4,355.27 449.4,355.44 450.4,355.4 451.4,355.39 452.4,355.85 453.4,355.39 454.4,355.92 455.4,355.31 456.4,355.86 457.4,355.35 458.4,355.63 459.4,355.7 460.4,355.4 461.4,355.77 462.4,355.53 463.4,355.49 464.4,355.54 465.4,355.69 466.4,355.6 467.4,355.43 468.4,355.26 469.4,355.64 470.4,356.19 471.4,355.26 472.4,355.62 473.4,355.5 474.4,355.49 475.4,355.86 476.4,355.94 477.4,355.41 478.4,355.82 479.4,355.27 480.4,355.71 481.4,355.74 482.4,355.5 483.4,355.44 484.4,355.64 485.4,355.82 486.4,354.46 487.4,355.94 488.4,355.69 489.4,355.63 490.4,355.79 491.4,355.67 492.4,355.88 493.4,355.85 494.4,355.62 495.4,355.75 496.4,355.85 497.4,355.89 498.4,355.52 499.4,355.8 500.4,355.71 501.4,355.81 502.4,355.72 503.4,355.41 504.4,355.88 505.4,355.71 506.4,355.27 507.4,355.75 508.4,355.5 509.4,355.55 510.4,355.87 511.4,355.94 512.4,355.58 513.4,355.79 514.4,355.35 515.4,355.31 516.4,355.86 517.4,355.47 518.4,355.92 519.4,355.29 520.4,355.85 521.4,355.28 522.4,355.56 523.4,355.35 524.4,355.73 525.4,355.36 526.4,355.34 527.4,355.6 528.4,355.78 529.4,355.53 530,355.6" fill="none" stroke="#ffffff" stroke-width="1.45" stroke-linejoin="round"/><polyline clip-path="url(#cp)" points="129,346.5 130,341.5 131.5,329 132.6,318.5 133.5,304.6 134.2,297 135,286 135.7,275.4 136.6,250.8 137.7,241 138.5,229 139.2,220.8 140,213 140.8,203 141.5,196 142.8,190" fill="none" stroke="#ffffff" stroke-width="1.5" stroke-dasharray="1.2 3" stroke-linejoin="round"/><polyline clip-path="url(#cp)" points="333.5,199 334.6,205.4 335.7,213 336.6,222.3 337.2,231.5 337.7,246 339.2,258.5 340,270.8 340.8,281.5 341.5,292.3 342,301.5 343,315.4 344.3,330.8 345.4,341.5" fill="none" stroke="#ffffff" stroke-width="1.5" stroke-dasharray="1.2 3" stroke-linejoin="round"/></svg>
<span class="t" style="left:31.39px;top:87.00px;font-size:11px;color:#fff;transform:scaleX(0.944);">1.028V</span>
<span class="t" style="left:32.73px;top:441.00px;font-size:11px;color:#fff;transform:scaleX(0.945);">-972.0mV</span>
<span class="t" style="left:471.01px;top:441.00px;font-size:11px;color:#fff;transform:scaleX(0.987);">5.000ns/div</span>
<span class="t" style="left:102.45px;top:218.00px;font-size:14px;color:#ffff00;font-weight:bold;transform:scaleX(0.906);">C2</span>
<span class="t" style="left:94.61px;top:295.00px;font-size:14px;color:#00ff00;font-weight:bold;transform:scaleX(0.782);">C1</span>
<span class="t" style="left:89.36px;top:336.00px;font-size:14px;color:#fff;font-weight:bold;transform:scaleX(0.859);">M1</span>
<div class="c1clip" style="left:6px;top:139px;width:16px;height:4px;background:#c0c0c0;border-top:1px solid #fff;overflow:hidden"></div>
<div style="left:6px;top:143px;width:16px;height:15px;background:#c0c0c0;border-top:1px solid #fff;border-bottom:1px solid #000"></div>
<div style="left:22px;top:139px;width:1px;height:19px;background:#000"></div>
<div style="left:6px;top:141px;width:16px;height:2px;overflow:hidden"><span class="t" style="left:1.5px;top:-8px;font-size:12px;transform:scaleX(.86)">C1</span></div>
<span class="t" style="left:7.36px;top:144.00px;font-size:12px;color:#000;transform:scaleX(0.877);">C2</span>
<div style="left:6px;top:267px;width:16px;height:15px;background:#fff;border-bottom:1px solid #000"></div>
<div style="left:22px;top:267px;width:1px;height:15px;background:#000"></div>
<span class="t" style="left:6.62px;top:268.00px;font-size:12px;color:#000;transform:scaleX(0.774);">M1</span>
<div style="left:537px;top:82px;width:102px;height:14px;background:#808080"></div>
<span class="t" style="left:539.00px;top:83.00px;font-size:10.5px;color:#c8c8c8;font-weight:bold;transform:scaleX(1.146);">Waveform</span>
<div class="r" style="left:537px;top:97px;width:102px;height:22px;"></div>
<div style="left:539px;top:99px;width:6px;height:18px;background:#00ff00"></div>
<span class="t" style="left:547.44px;top:103.00px;font-size:11.5px;color:#000;transform:scaleX(0.916);">C1 200.0mV/div</span>
<div class="r" style="left:537px;top:119px;width:102px;height:22px;"></div>
<div style="left:539px;top:121px;width:6px;height:18px;background:#ffff00"></div>
<span class="t" style="left:547.44px;top:125.00px;font-size:11.5px;color:#000;transform:scaleX(0.916);">C2 200.0mV/div</span>
<div class="p" style="left:537px;top:141px;width:102px;height:21px;"></div>
<div style="left:539px;top:143px;width:6px;height:18px;background:#fff"></div>
<span class="t" style="left:547.21px;top:147.00px;font-size:11.5px;color:#000;transform:scaleX(0.917);">M1 200.0mV/div</span>
<div style="left:537px;top:169px;width:102px;height:15px;background:#808080"></div>
<span class="t" style="left:539.34px;top:171.00px;font-size:10.5px;color:#c8c8c8;font-weight:bold;transform:scaleX(1.126);">Measurement</span>
<div class="r" style="left:537px;top:185px;width:102px;height:32px;"></div>
<div style="left:539px;top:187px;width:6px;height:28px;background:#fff"></div>
<span class="t" style="left:539.53px;top:189.00px;font-size:11.5px;color:#000;transform:scaleX(0.899);">1</span>
<span class="t" style="left:547.13px;top:189.00px;font-size:11.5px;color:#000;transform:scaleX(0.899);">High</span>
<span class="t" style="left:581.60px;top:189.00px;font-size:11.5px;color:#000;transform:scaleX(0.800);">M1</span>
<span class="t" style="left:566.76px;top:203.00px;font-size:11px;color:#000;transform:scaleX(0.968);">477.4432mV</span>
<div class="r" style="left:537px;top:217px;width:102px;height:32px;"></div>
<div style="left:539px;top:219px;width:6px;height:28px;background:#fff"></div>
<span class="t" style="left:539.75px;top:221.00px;font-size:11.5px;color:#000;transform:scaleX(0.899);">2</span>
<span class="t" style="left:547.13px;top:221.00px;font-size:11.5px;color:#000;transform:scaleX(0.899);">Low</span>
<span class="t" style="left:581.60px;top:221.00px;font-size:11.5px;color:#000;transform:scaleX(0.800);">M1</span>
<span class="t" style="left:566.52px;top:235.00px;font-size:11px;color:#000;transform:scaleX(0.968);">-439.2648mV</span>
<div class="r" style="left:537px;top:249px;width:102px;height:32px;"></div>
<div style="left:539px;top:251px;width:6px;height:28px;background:#fff"></div>
<span class="t" style="left:539.75px;top:253.00px;font-size:11.5px;color:#000;transform:scaleX(0.899);">3</span>
<span class="t" style="left:547.80px;top:253.00px;font-size:11.5px;color:#000;transform:scaleX(0.899);">Ampl</span>
<span class="t" style="left:581.60px;top:253.00px;font-size:11.5px;color:#000;transform:scaleX(0.800);">M1</span>
<span class="t" style="left:566.52px;top:267.00px;font-size:11px;color:#000;transform:scaleX(0.968);">916.7080mV</span>
<div class="r" style="left:537px;top:281px;width:102px;height:32px;"></div>
<div style="left:539px;top:283px;width:6px;height:28px;background:#fff"></div>
<span class="t" style="left:539.98px;top:285.00px;font-size:11.5px;color:#000;transform:scaleX(0.899);">4</span>
<span class="t" style="left:547.35px;top:285.00px;font-size:11.5px;color:#000;transform:scaleX(0.899);">+Crs</span>
<span class="t" style="left:581.60px;top:285.00px;font-size:11.5px;color:#000;transform:scaleX(0.800);">M1</span>
<span class="t" style="left:566.52px;top:299.00px;font-size:11px;color:#000;transform:scaleX(0.968);">29.56066ns</span>
<div class="r" style="left:537px;top:313px;width:102px;height:32px;"></div>
<div style="left:539px;top:315px;width:6px;height:28px;background:#fff"></div>
<span class="t" style="left:539.75px;top:317.00px;font-size:11.5px;color:#000;transform:scaleX(0.899);">5</span>
<span class="t" style="left:547.13px;top:317.00px;font-size:11.5px;color:#000;transform:scaleX(0.899);">Fall</span>
<span class="t" style="left:581.60px;top:317.00px;font-size:11.5px;color:#000;transform:scaleX(0.800);">M1</span>
<span class="t" style="left:566.52px;top:331.00px;font-size:11px;color:#000;transform:scaleX(0.968);">707.9506ps</span>
<div class="p" style="left:537px;top:345px;width:102px;height:32px;"></div>
<div style="left:539px;top:347px;width:6px;height:28px;background:#fff"></div>
<span class="t" style="left:539.75px;top:349.00px;font-size:11.5px;color:#000;transform:scaleX(0.899);">6</span>
<span class="t" style="left:547.13px;top:349.00px;font-size:11.5px;color:#000;transform:scaleX(0.899);">Rise</span>
<span class="t" style="left:581.60px;top:349.00px;font-size:11.5px;color:#000;transform:scaleX(0.800);">M1</span>
<span class="t" style="left:566.52px;top:363.00px;font-size:11px;color:#000;transform:scaleX(0.968);">690.8206ps</span>
<div class="r" style="left:6px;top:459px;width:44px;height:23px;"></div>
<div style="left:8px;top:461px;width:5px;height:19px;background:#fff"></div>
<span class="t" style="left:14.18px;top:465.00px;font-size:12px;color:#000;transform:scaleX(0.826);">M1</span>
<div class="s" style="left:67px;top:459px;width:83px;height:22px;background:#fff"></div>
<div style="left:118px;top:461px;width:30px;height:19px;background:#c0c0c0"></div>
<span class="t" style="left:69.73px;top:465.00px;font-size:11.5px;color:#000;transform:scaleX(0.935);">200.0mV/</span>
<div class="r" style="left:118px;top:461px;width:15px;height:19px;"></div>
<div class="r" style="left:133px;top:461px;width:15px;height:9px;"></div>
<div class="r" style="left:133px;top:470px;width:15px;height:10px;"></div>
<div class="s" style="left:152px;top:459px;width:83px;height:22px;"></div>
<span class="t" style="left:154.77px;top:465.00px;font-size:11.5px;color:#808080;transform:scaleX(0.912);">0.0V</span>
<div class="r" style="left:203px;top:461px;width:15px;height:19px;"></div>
<div class="r" style="left:218px;top:461px;width:15px;height:9px;"></div>
<div class="r" style="left:218px;top:470px;width:15px;height:10px;"></div>
<div class="s" style="left:253px;top:459px;width:30px;height:23px;background:#fff"></div>
<span class="t" style="left:257.12px;top:465.00px;font-size:11.5px;color:#000;transform:scaleX(0.902);">Main</span>
<div class="r" style="left:283px;top:459px;width:30px;height:23px;"></div>
<div class="r" style="left:313px;top:459px;width:30px;height:23px;"></div>
<div class="s" style="left:361px;top:459px;width:89px;height:22px;"></div>
<span class="t" style="left:363.42px;top:465.00px;font-size:11.5px;color:#808080;transform:scaleX(0.955);">5.00000ns</span>
<div class="r" style="left:418px;top:461px;width:15px;height:19px;"></div>
<div class="r" style="left:433px;top:461px;width:15px;height:9px;"></div>
<div class="r" style="left:433px;top:470px;width:15px;height:10px;"></div>
<div class="s" style="left:452px;top:459px;width:80px;height:22px;"></div>
<span class="t" style="left:454.53px;top:465.00px;font-size:11.5px;color:#808080;transform:scaleX(0.938);">21.500n</span>
<div class="r" style="left:500px;top:461px;width:15px;height:19px;"></div>
<div class="r" style="left:515px;top:461px;width:15px;height:9px;"></div>
<div class="r" style="left:515px;top:470px;width:15px;height:10px;"></div>
<div style="left:533px;top:459px;width:1px;height:24px;background:#fff"></div>
<div style="left:534px;top:459px;width:110px;height:23px;border-top:1px solid #808080;border-left:1px solid #808080;border-bottom:1px solid #fff;border-right:1px solid #fff;box-sizing:border-box"></div>
<span class="t" style="left:62.60px;top:33.00px;font-size:12.5px;color:#000;font-weight:bold;font-family:&quot;Liberation Serif&quot;,serif;transform:scaleX(1.333);font-style:italic;">f</span>
<span class="t" style="left:68.20px;top:37.00px;font-size:9.5px;color:#000;font-weight:bold;font-family:&quot;Liberation Serif&quot;,serif;transform:scaleX(1.289);font-style:italic;">x</span>
<span class="t" style="left:129.44px;top:35.00px;font-size:12.5px;color:#000;transform:scaleX(0.925);">C</span>
<span class="t" style="left:194.3px;top:62.50px;font-size:6.5px;color:#000080;font-weight:bold;transform:scaleX(0.9);">P</span>
<span class="t" style="left:217.3px;top:62.50px;font-size:6.5px;color:#000080;font-weight:bold;transform:scaleX(0.9);">F</span>
<svg style="left:0;top:0" width="650" height="490" viewBox="0 0 650 490">
<line x1="566.8" y1="20.6" x2="571.2" y2="16.8" stroke="#e00000" stroke-width="1"/>
<rect x="597" y="16" width="6" height="2" fill="#000"/>
<g fill="#c0c0c0" stroke="#808080" stroke-width="1" shape-rendering="crispEdges"><rect x="615.5" y="9.5" width="6" height="5"/><line x1="615" y1="10.5" x2="622" y2="10.5"/><rect x="612.5" y="12.5" width="6" height="5"/><line x1="612" y1="13.5" x2="619" y2="13.5"/></g>
<g stroke="#808080" stroke-width="1.6"><line x1="631" y1="10" x2="639" y2="18"/><line x1="639" y1="10" x2="631" y2="18"/></g>
<path d="M323 37h7.400l-3.700 4z" fill="#000"/>
<path d="M454 37h7.400l-3.700 4z" fill="#000"/>
<polyline points="473.5,43 479,43 486,34.300 493,34.300" fill="none" stroke="#fff" stroke-width="1.2"/><polyline points="473.5,44.300 479.500,44.300 486.500,35.600 493,35.600" fill="none" stroke="#000" stroke-width="1.600"/>
<rect x="554.5" y="34.5" width="8" height="9" fill="none" stroke="#000" stroke-width="1.2"/><rect x="556.5" y="36.5" width="4" height="1.6" fill="#e8e8e8" stroke="#000" stroke-width=".5"/><rect x="556.3" y="39.6" width="1.4" height="1.8" fill="#000"/><rect x="559.3" y="39.6" width="1.4" height="1.8" fill="#000"/>
<path d="M571.2 36.2h4.600l-2.300-2.300z" fill="#000"/><path d="M571.2 42.1h4.600l-2.300 2.300z" fill="#000"/>
<path d="M620 32.800v11l2.600-2.400 2.300 5.200 1.900-.9-2.300-5h3.400z" fill="#000"/>
<path d="M55 67h7l-3.5 3.5z" fill="#000"/>
<path d="M128 67h7l-3.5 3.5z" fill="#000"/>
<path d="M23 139.800l5.800 6.400-1.600 2.300h-4.200z" fill="#00ff00" stroke="#000" stroke-width=".8"/>
<path d="M23 144.600l5.800 6-5.800 6z" fill="#ffff00" stroke="#404000" stroke-width=".5"/>
<path d="M22.500 267.300l6.300 7-6.300 7.200" fill="#fff" stroke="#000" stroke-width="1"/>
<path d="M608 197.6h2.200c2.300 0 2.200-9.300 3.500-9.300h.8c1.500 0 1.800 11 4.600 11 1 0 1.800-1 2.700-2.400" fill="none" stroke="#000" stroke-width="1.250"/>
<path d="M608 229.6h2.200c2.300 0 2.200-9.300 3.500-9.300h.8c1.500 0 1.800 11 4.600 11 1 0 1.800-1 2.700-2.400" fill="none" stroke="#000" stroke-width="1.250"/>
<path d="M608 261.6h2.200c2.300 0 2.200-9.300 3.500-9.300h.8c1.500 0 1.800 11 4.600 11 1 0 1.800-1 2.700-2.400" fill="none" stroke="#000" stroke-width="1.250"/>
<path d="M608 293.6h2.200c2.300 0 2.200-9.300 3.500-9.300h.8c1.500 0 1.800 11 4.600 11 1 0 1.800-1 2.700-2.400" fill="none" stroke="#000" stroke-width="1.250"/>
<path d="M608 325.6h2.200c2.300 0 2.200-9.300 3.500-9.300h.8c1.500 0 1.800 11 4.600 11 1 0 1.800-1 2.700-2.400" fill="none" stroke="#000" stroke-width="1.250"/>
<path d="M608 357.6h2.200c2.300 0 2.200-9.300 3.500-9.300h.8c1.500 0 1.800 11 4.600 11 1 0 1.800-1 2.700-2.400" fill="none" stroke="#000" stroke-width="1.250"/>
<path d="M34.5 472.5h10l-5-5z" fill="#000"/>
<rect x="121.5" y="465.5" width="8" height="9" fill="none" stroke="#000" stroke-width="1.2"/><rect x="123.5" y="467.5" width="4" height="1.6" fill="#e8e8e8" stroke="#000" stroke-width=".5"/><rect x="123.3" y="470.6" width="1.4" height="1.8" fill="#000"/><rect x="126.3" y="470.6" width="1.4" height="1.8" fill="#000"/>
<path d="M138.2 466.7h4.600l-2.300-2.300z" fill="#000"/><path d="M138.2 473.6h4.600l-2.300 2.300z" fill="#000"/>
<rect x="206.5" y="465.5" width="8" height="9" fill="none" stroke="#000" stroke-width="1.2"/><rect x="208.5" y="467.5" width="4" height="1.6" fill="#e8e8e8" stroke="#000" stroke-width=".5"/><rect x="208.3" y="470.6" width="1.4" height="1.8" fill="#000"/><rect x="211.3" y="470.6" width="1.4" height="1.8" fill="#000"/>
<path d="M223.2 466.7h4.600l-2.300-2.300z" fill="#808080"/><path d="M223.2 473.6h4.600l-2.300 2.300z" fill="#808080"/>
<circle cx="295.7" cy="467.5" r="5.2" fill="none" stroke="#000" stroke-width="1.3"/><line x1="299.7" y1="471.5" x2="305.0" y2="476.8" stroke="#000" stroke-width="2.6"/>
<text x="295.7" y="470.8" font-size="9.5" font-weight="bold" text-anchor="middle" font-family="Liberation Sans,sans-serif">1</text>
<circle cx="325.7" cy="467.5" r="5.2" fill="none" stroke="#000" stroke-width="1.3"/><line x1="329.7" y1="471.5" x2="335.0" y2="476.8" stroke="#000" stroke-width="2.6"/>
<text x="325.7" y="470.8" font-size="9.5" font-weight="bold" text-anchor="middle" font-family="Liberation Sans,sans-serif">2</text>
<rect x="421.5" y="465.5" width="8" height="9" fill="none" stroke="#000" stroke-width="1.2"/><rect x="423.5" y="467.5" width="4" height="1.6" fill="#e8e8e8" stroke="#000" stroke-width=".5"/><rect x="423.3" y="470.6" width="1.4" height="1.8" fill="#000"/><rect x="426.3" y="470.6" width="1.4" height="1.8" fill="#000"/>
<path d="M438.2 466.7h4.600l-2.300-2.300z" fill="#808080"/><path d="M438.2 473.6h4.600l-2.300 2.300z" fill="#808080"/>
<rect x="503.5" y="465.5" width="8" height="9" fill="none" stroke="#000" stroke-width="1.2"/><rect x="505.5" y="467.5" width="4" height="1.6" fill="#e8e8e8" stroke="#000" stroke-width=".5"/><rect x="505.3" y="470.6" width="1.4" height="1.8" fill="#000"/><rect x="508.3" y="470.6" width="1.4" height="1.8" fill="#000"/>
<path d="M520.2 466.7h4.600l-2.300-2.300z" fill="#808080"/><path d="M520.2 473.6h4.600l-2.300 2.300z" fill="#808080"/>
<g stroke="#000" stroke-width="1" stroke-linejoin="round"><path d="M26.500 38.500l3.200-2.500v6l-3.200 3z" fill="#c0c0c0"/><path d="M14.300 40c0-1 .8-1.500 1.800-1.500h10.400v6.500h-10.400c-1 0-1.800-.5-1.800-1.500z" fill="#c0c0c0"/><path d="M17.200 37.500l2.200-5h7.800l-1.500 5z" fill="#fff"/><path d="M16 46.500h10.500" fill="none"/><path d="M20.300 34.200h5M19.600 35.800h5" stroke="#808080" stroke-width=".8" fill="none"/></g><rect x="15" y="41" width="11.500" height="2" fill="#fff"/><rect x="21" y="41.300" width="3.200" height="1.500" fill="#e8e000"/><path d="M27.800 39.500v2M28.800 38.700v2" stroke="#000" stroke-width=".7"/>
<g><path d="M41.200 36.800l9.300 8.200" stroke="#000" stroke-width="2.400"/><path d="M41.200 36.800l9.300 8.200" stroke="#e0e0e0" stroke-width="1" stroke-dasharray="1 1"/><path d="M38.200 33.800h1.600v1.700h1.400v-2h1.300v2.800l-1.300 1.200h-1.800l-1.200-1.200z" fill="#000"/><path d="M40.400 45.300l7.600-7.500" stroke="#000" stroke-width="2.400"/><path d="M40.600 45.100l7.400-7.300" stroke="#c00000" stroke-width="1.100"/><path d="M44.800 35l2.700-1.700 3 .3 1.800 1.800.9 2.800-1.300 1.400-1.400-.9-.3-1.600-1.800-1-1.500 1.800-1.500-1z" fill="#8c8c00" stroke="#000" stroke-width=".7"/></g>
<clipPath id="cw"><rect x="83" y="30" width="17" height="20"/></clipPath><g fill="none" stroke-linejoin="round" clip-path="url(#cw)"><path d="M82 36.5c2.300 1.500 3.600 5.900 5.100 5.900 2 0 2.800-6.400 4.800-6.400s2.800 6.400 4.800 6.400c1.500 0 2.600-4 4.500-6.500" stroke="#ffff00" stroke-width="6.800"/><path d="M82 36.5c2.300 1.500 3.600 5.900 5.100 5.900 2 0 2.800-6.400 4.800-6.400s2.800 6.400 4.800 6.400c1.500 0 2.600-4 4.500-6.500" stroke="#ff0040" stroke-width="4.600"/><path d="M82 36.5c2.300 1.500 3.600 5.900 5.100 5.900 2 0 2.800-6.400 4.800-6.400s2.800 6.400 4.800 6.400c1.500 0 2.600-4 4.500-6.500" stroke="#2828ff" stroke-width="2"/></g>
<g fill="#000"><path d="M106 32.500h4.500l-1.500 1.500 1.500 1.500-1 1-1.500-1.500-2 1.500z"/><path d="M122 32.500h-4.500l1.500 1.500-1.500 1.500 1 1 1.500-1.500 2 1.500z"/><path d="M106 46.500h4.500l-1.500-1.500 1.500-1.500-1-1-1.500 1.500-2-1.500z"/><path d="M122 46.500h-4.500l1.500-1.500-1.500-1.500 1-1 1.500 1.500 2-1.500z"/></g><path d="M110 42v-6h4v6.500h4.500v-6" fill="none" stroke="#0040ff" stroke-width="2"/>
<path d="M148.2 74.500h3.300l8.500-9h3.800" fill="none" stroke="#000080" stroke-width="1.15"/>
<path d="M154 67.500h6l-6 5h-4M154 72.500h2" fill="none" stroke="#00ff00" stroke-width="1.15"/>
<path d="M171.2 65.500h3.800l8.500 9h3.300" fill="none" stroke="#000080" stroke-width="1.15"/>
<path d="M175 67.500h6M176 67.500l6 5h4M179 72.500h3" fill="none" stroke="#00ff00" stroke-width="1.15"/>
<path d="M198 66.500v-3h9v3" fill="none" stroke="#00ff00" stroke-width="1.15"/>
<path d="M195 75.500h3.500v-7h4v7h4.500v-7h2.500" fill="none" stroke="#000080" stroke-width="1.15"/>
<path d="M197 70l2.500 2.500M206 70l2.500 2.500" fill="none" stroke="#00ff00" stroke-width="1.2"/>
<path d="M221 66.500v-3h9v3" fill="none" stroke="#00ff00" stroke-width="1.15"/>
<path d="M218 75.500h3.500v-7h4v7h4.500v-7h2.500" fill="none" stroke="#000080" stroke-width="1.15"/>
<path d="M220 70l2.500 2.500M229 70l2.500 2.500" fill="none" stroke="#00ff00" stroke-width="1.2"/>
<path d="M240.2 75.500h2.300l10.800-11.500h2.500" fill="none" stroke="#000080" stroke-width="1.15"/>
<path d="M246.5 68.500l3.500 3.500" fill="none" stroke="#00ff00" stroke-width="1.15"/>
<path d="M263.2 64h2.500l10.800 11.500h2.300" fill="none" stroke="#000080" stroke-width="1.15"/>
<path d="M273.5 68.500l-3.500 3.500" fill="none" stroke="#00ff00" stroke-width="1.15"/>
<path d="M290 66v-2.500h8v2.500" fill="none" stroke="#00ff00" stroke-width="1.15"/>
<path d="M286.2 75.500h3.800v-7h8v7h3.500" fill="none" stroke="#000080" stroke-width="1.15"/>
<path d="M288.5 70l2.500 2.500M296.5 70l2.500 2.500" fill="none" stroke="#00ff00" stroke-width="1.2"/>
<path d="M313 66v-2.500h8v2.500" fill="none" stroke="#00ff00" stroke-width="1.15"/>
<path d="M310 68.500h3v6.500h8v-6.500h3" fill="none" stroke="#000080" stroke-width="1.15"/>
<path d="M311.5 70l2.500 2.500M319.5 72.500l2.500-2.500" fill="none" stroke="#00ff00" stroke-width="1.2"/>
<path d="M335 66v-2.500h5v2.500" fill="none" stroke="#00ff00" stroke-width="1.15"/>
<path d="M332.2 74.500h3.300v-6h4.500v6h6.500v-6h2" fill="none" stroke="#000080" stroke-width="1.15"/>
<path d="M334 70l2.500 2.500M338.5 70l2.500 2.500" fill="none" stroke="#00ff00" stroke-width="1.2"/>
<path d="M361 66v-2.500h7v2.500" fill="none" stroke="#00ff00" stroke-width="1.15"/>
<path d="M356 74.500h3.500v-6h3v6h5.500v-6h3" fill="none" stroke="#000080" stroke-width="1.15"/>
<path d="M360.5 70l2.500 2.500M366.5 70l2.500 2.500" fill="none" stroke="#00ff00" stroke-width="1.2"/>
<path d="M380 66v-2.500h10.500v2.500" fill="none" stroke="#00ff00" stroke-width="1.15"/>
<path d="M378.5 72v2.500h2v-6h2v6h2v-6h2v6h2v-6h2v6h2.500" fill="none" stroke="#000080" stroke-width="1" shape-rendering="crispEdges"/>
<path d="M378.5 70l2 2M389.5 70l2 2" fill="none" stroke="#00ff00" stroke-width="1.1"/>
<path d="M401.5 75.800h3.200l1.300-3.500 1-1.500 1.200-5 .8-2.800 1.200 2.800 1 1.200.6 5 1 1.800 1.200 3.800 1.200-1.800h2.800" fill="none" stroke="#000" stroke-width="2"/>
<path d="M401.5 75.800h3.200l1.300-3.500 1-1.500 1.200-5 .8-2.800 1.200 2.800 1 1.200.6 5 1 1.800 1.200 3.800 1.200-1.800h2.800" fill="none" stroke="#00ff00" stroke-width="1.1" transform="translate(-.5,-.4)"/>
<path d="M424.5 75.800h3.200l1.300-3.500 1-1.500 1.200-5 .8-2.800 1.200 2.800 1 1.200.6 5 1 1.800 1.200 3.800 1.200-1.800h2.800" fill="none" stroke="#000" stroke-width="2"/>
<path d="M424.5 75.800h3.200l1.300-3.500 1-1.500 1.200-5 .8-2.800 1.200 2.800 1 1.200.6 5 1 1.800 1.200 3.800 1.200-1.800h2.800" fill="none" stroke="#00ff00" stroke-width="1.1" transform="translate(-.5,-.4)"/>
<path d="M406 73.500h3.400l-1.700 2.200z" fill="#000"/>
<path d="M451 66v-2.500h9v2.500" fill="none" stroke="#00ff00" stroke-width="1.15"/>
<path d="M447 73h4l1-4.500h10.500M447 75.500h12l1-5h3" fill="none" stroke="#000080" stroke-width="1.15"/>
<path d="M450 70.500l2 2M458.5 72.500l2 2" fill="none" stroke="#00ff00" stroke-width="1.1"/>
<line x1="535" y1="65.500" x2="550" y2="65.500" stroke="#ff0000" stroke-width="1.200"/><line x1="535" y1="70.800" x2="550" y2="70.800" stroke="#ff0000" stroke-width="1.200" stroke-dasharray="2 1"/>
<path d="M558.800 65.500c1.500 3 2.500 6.500 4.200 6.500 2.200 0 3-8.300 5-8.300s2.800 8.300 5 8.300c1 0 1.500-.8 2-1.800" fill="none" stroke="#000080" stroke-width="1.500"/>
<rect x="582" y="64" width="16" height="11" fill="#ffff00"/><path d="M584.5 64v2M587.5 64v2M590.5 64v2M593.5 64v2M596.5 64v2M584.5 75v-2M587.5 75v-2M590.5 75v-2M593.5 75v-2M596.5 75v-2" stroke="#000" stroke-width="1"/>
<g font-size="6.500" font-weight="bold" font-family="Liberation Sans,sans-serif" fill="#484800" text-anchor="middle"><text x="584.800" y="72.700">1</text><text x="590.300" y="72.700">2</text><text x="595.800" y="72.700">3</text></g>
<path d="M604.3 72.500V69.500h1.200v-.7h1v-1.500h1v.5h.8v-2.500h1v.5h.7v-2.500h.8l.8-1.800.8 1.800h.6v2.500h.7v-.5h1v2.200h.8v-.5h1v1.700h1l2 2v1.800z" fill="#000080"/>
<g fill="none" stroke="#000080" stroke-width="1.400"><path d="M630.300 61.300v2.200h8.800v-2.200M630.300 74.700v-2.200h8.800v2.200"/><ellipse cx="634.700" cy="68" rx="3.900" ry="3.100"/></g>
</svg>
</div></body></html>
